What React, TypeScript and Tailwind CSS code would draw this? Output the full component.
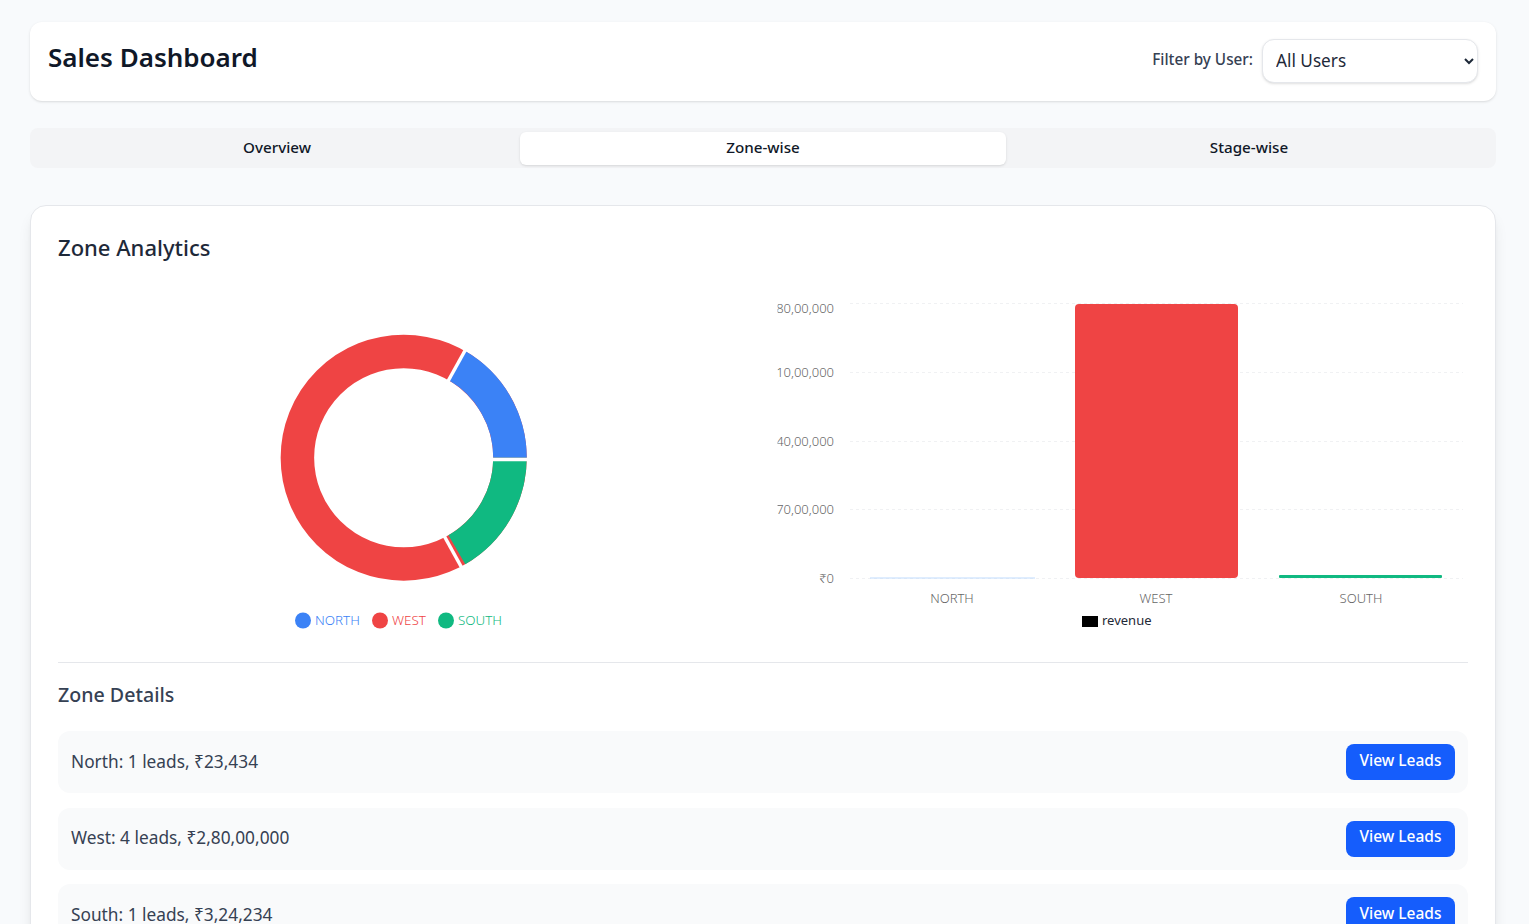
import React from 'react';

const FONT = "font-['Noto_Sans',sans-serif]";

const zones = [
  { id: 'north', text: 'North: 1 leads, ₹23,434' },
  { id: 'west', text: 'West: 4 leads, ₹2,80,00,000' },
  { id: 'south', text: 'South: 1 leads, ₹3,24,234' },
];

const tabs = ['Overview', 'Zone-wise', 'Stage-wise'];

const yTicks = [
  { label: '₹2,80,00,000', grid: 14.5, text: 24 },
  { label: '₹2,10,00,000', grid: 83.5, text: 88 },
  { label: '₹1,40,00,000', grid: 152.5, text: 157 },
  { label: '₹70,00,000', grid: 220.5, text: 225 },
  { label: '₹0', grid: 289.5, text: 294 },
];

const DonutChart: React.FC = () => (
  <svg viewBox="0 0 693 350" className="block h-[350px] w-full">
    <g fill="none" strokeWidth="33.5">
      <circle cx="345.7" cy="168.7" r="106.3" stroke="#ef4444" />
      <path d="M452 168.7 A106.3 106.3 0 0 0 398.85 76.6" stroke="#3b82f6" />
      <path d="M452 168.7 A106.3 106.3 0 0 1 398.85 260.8" stroke="#10b981" />
    </g>
    <g stroke="#fff" strokeWidth="3.5">
      <line x1="430" y1="170.4" x2="474" y2="170.4" />
      <line x1="389" y1="94" x2="409" y2="58" />
      <line x1="384" y1="243" x2="405" y2="281" />
    </g>
    <g fontSize="13.4" fontWeight="300">
      <circle cx="245" cy="331.5" r="8" fill="#3b82f6" />
      <text x="257" y="336" fill="#3b82f6">NORTH</text>
      <circle cx="322" cy="331.5" r="8" fill="#ef4444" />
      <text x="334" y="336" fill="#ef4444">WEST</text>
      <circle cx="388" cy="331.5" r="8" fill="#10b981" />
      <text x="400" y="336" fill="#10b981">SOUTH</text>
    </g>
  </svg>
);

const BarChart: React.FC = () => (
  <svg viewBox="0 0 693 350" className="block h-[350px] w-full">
    <defs>
      <clipPath id="chart-clip">
        <rect x="2.5" y="0" width="691" height="350" />
      </clipPath>
    </defs>
    {yTicks.map((t) => (
      <g key={t.label}>
        <line x1="75" x2="688" y1={t.grid} y2={t.grid} stroke="#f0f1f3" strokeDasharray="3 3" />
        <text
          x="59"
          y={t.text}
          textAnchor="end"
          fontSize="13"
          fontWeight="300"
          fill="#666"
          clipPath="url(#chart-clip)"
        >
          {t.label}
        </text>
      </g>
    ))}
    <rect x="95" y="288.5" width="165" height="1" fill="#bfdbfe" />
    <rect x="300" y="15" width="163" height="274" rx="4" fill="#ef4444" />
    <rect x="504" y="286" width="163" height="3" rx="1" fill="#10b981" />
    <g fontSize="13" fontWeight="300" fill="#666" textAnchor="middle">
      <text x="177" y="314">NORTH</text>
      <text x="381" y="314">WEST</text>
      <text x="586" y="314">SOUTH</text>
    </g>
    <rect x="307" y="327" width="16" height="11" fill="#000" />
    <text x="327" y="336" fontSize="13" fill="#1f2937">revenue</text>
  </svg>
);

const App: React.FC = () => {
  return (
    <div className={`min-h-screen bg-[#f8fafc] pt-[22px] pl-[30px] pr-[33px] pb-8 ${FONT}`}>
      <header className="flex h-[79px] items-center justify-between rounded-xl bg-white pb-[2px] pl-[18px] pr-[18px] shadow">
        <h1 className="mb-[6px] text-[26px] font-semibold text-gray-900">Sales Dashboard</h1>
        <div className="flex items-center gap-[9px]">
          <label className="mb-[2px] text-[15.3px] font-medium text-gray-700">Filter by User:</label>
          <select className="h-[44px] w-[216px] rounded-xl border border-gray-200 bg-white pl-[9px] text-[17.2px] text-gray-800 shadow-sm">
            <option>All Users</option>
          </select>
        </div>
      </header>

      <nav className="mt-[27px] grid h-[40px] grid-cols-3 rounded-lg bg-gray-100 p-1">
        {tabs.map((tab) => (
          <button
            key={tab}
            className={
              tab === 'Zone-wise'
                ? 'h-[33px] rounded-md bg-white pb-[3px] text-[15.2px] font-medium text-gray-900 shadow-sm'
                : 'h-[33px] rounded-md pb-[3px] text-[15.2px] font-medium text-gray-900'
            }
          >
            {tab}
          </button>
        ))}
      </nav>

      <section className="mt-[37px] rounded-2xl border border-gray-200 bg-white px-[27px] pt-[25px] pb-8 shadow-lg">
        <h2 className="text-[22px] leading-8 font-medium text-gray-800">Zone Analytics</h2>

        <div className="mt-[26px] grid grid-cols-2 gap-6 border-b border-gray-200 pb-[23px]">
          <DonutChart />
          <BarChart />
        </div>

        <h3 className="mt-[18px] text-[19.6px] leading-7 font-medium text-gray-700">Zone Details</h3>

        <div className="mt-[22px] flex flex-col gap-[14.5px]">
          {zones.map((zone) => (
            <div
              key={zone.id}
              className="flex h-[62px] items-center justify-between rounded-xl bg-gray-50 pl-[13px] pr-[13px]"
            >
              <span className="mb-[1px] text-[17.3px] text-gray-700">{zone.text}</span>
              <button className="h-9 w-[109px] rounded-lg bg-[#155dfc] pb-[3px] text-[15.5px] font-medium text-white">
                View Leads
              </button>
            </div>
          ))}
        </div>
      </section>
    </div>
  );
};

export default App;
